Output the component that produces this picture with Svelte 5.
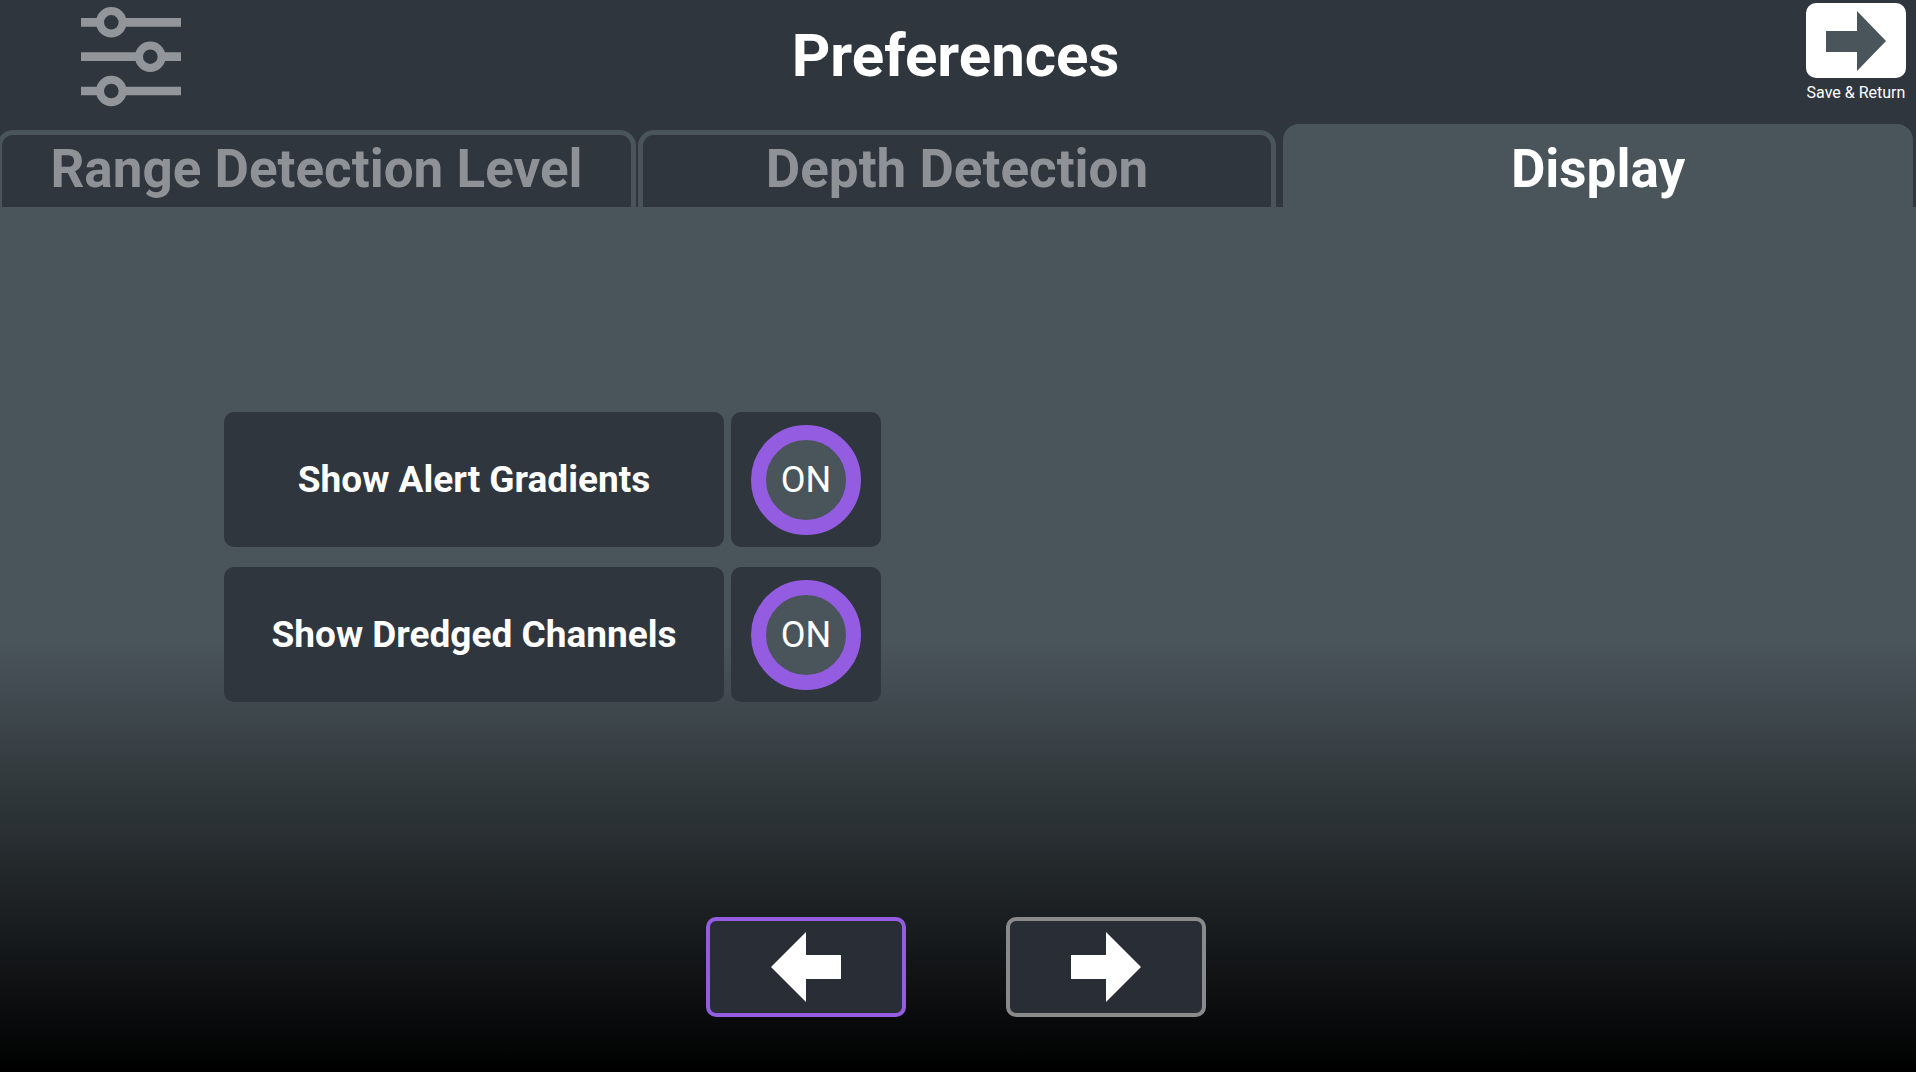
<script>
  let tabs = [
    { name: 'Range Detection Level', active: false },
    { name: 'Depth Detection', active: false },
    { name: 'Display', active: true }
  ];
  let options = [
    { label: 'Show Alert Gradients', value: 'ON' },
    { label: 'Show Dredged Channels', value: 'ON' }
  ];
</script>

<div class="page">
  <header class="header">
    <svg class="sliders" width="100" height="112" viewBox="0 0 100 112">
      <g fill="none" stroke="#92969a">
        <path d="M0 22.300H100M0 56.700H100M0 91H100" stroke-width="8.700" />
        <g fill="#2f363e" stroke-width="8">
          <circle cx="30.300" cy="22.300" r="11.300" />
          <circle cx="69.300" cy="56.700" r="11.300" />
          <circle cx="30.300" cy="91" r="11.300" />
        </g>
      </g>
    </svg>
    <h1>Preferences</h1>
    <div class="save">
      <button class="save-btn" aria-label="Save and return">
        <svg width="60" height="60" viewBox="0 0 60 60">
          <path d="M0 20H31V0L60 30L31 60V41H0Z" fill="#4a555b" />
        </svg>
      </button>
      <span>Save &amp; Return</span>
    </div>
  </header>

  <nav class="tabs">
    {#each tabs as tab}
      <div class="tab" class:active={tab.active}>{tab.name}</div>
    {/each}
  </nav>

  <main class="content">
    <div class="options">
      {#each options as opt}
        <div class="row">
          <div class="label">{opt.label}</div>
          <div class="toggle-box">
            <div class="ring">{opt.value}</div>
          </div>
        </div>
      {/each}
    </div>

    <div class="pager">
      <button class="page-btn selected" aria-label="Previous">
        <svg width="70" height="70" viewBox="0 0 70 70">
          <path d="M0 35L35 0V23H70V47H35V70Z" fill="#fff" />
        </svg>
      </button>
      <button class="page-btn" aria-label="Next">
        <svg width="70" height="70" viewBox="0 0 70 70">
          <path d="M70 35L35 0V23H0V47H35V70Z" fill="#fff" />
        </svg>
      </button>
    </div>
  </main>
</div>

<style>
  :global(body) {
    margin: 0;
    background: #000;
  }

  .page {
    width: 1916px;
    height: 1072px;
    display: flex;
    flex-direction: column;
    overflow: hidden;
    background: #2f363e;
    font-family: Roboto, sans-serif;
    color: #fff;
  }

  .header {
    height: 124px;
    flex: none;
    display: grid;
    grid-template-columns: 1fr auto 1fr;
    align-items: start;
    padding-right: 5px;
  }

  .sliders {
    display: block;
    margin-left: 81px;
  }

  h1 {
    margin: 25px 0 0;
    font-size: 60px;
    line-height: 62px;
    font-weight: 700;
  }

  .save {
    justify-self: end;
    margin: 3px 5px 0 0;
    width: 100px;
    display: flex;
    flex-direction: column;
    align-items: center;
    font-size: 16px;
    line-height: 18px;
    white-space: nowrap;
  }

  .save-btn {
    width: 100px;
    height: 75px;
    padding: 0;
    border: none;
    border-radius: 10px;
    background: #fff;
    display: flex;
    align-items: center;
    justify-content: center;
    margin-bottom: 6px;
  }

  .tabs {
    height: 83px;
    flex: none;
    display: grid;
    grid-template-columns: 639px 638px 635px;
    column-gap: 2px;
    margin-left: -3px;
    align-items: end;
  }

  .tab {
    box-sizing: border-box;
    height: 77px;
    border: 5px solid #4a555b;
    border-bottom: none;
    border-radius: 16px 16px 0 0;
    display: flex;
    align-items: center;
    justify-content: center;
    font-size: 53px;
    font-weight: 700;
    color: #8e9296;
    padding-bottom: 4px;
  }

  .tab.active {
    height: 83px;
    border: none;
    background: #4a555b;
    color: #fff;
    margin-left: 5px;
    padding: 6px 0 0;
  }

  .content {
    flex: 1;
    display: flex;
    flex-direction: column;
    background: linear-gradient(#4a555b 0, #4a555b 50%, #000 100%);
  }

  .options {
    display: flex;
    flex-direction: column;
    gap: 20px;
    padding: 205px 0 0 224px;
  }

  .row {
    display: flex;
    gap: 7px;
  }

  .label {
    width: 500px;
    height: 135px;
    border-radius: 10px;
    background: #2f363e;
    display: flex;
    align-items: center;
    justify-content: center;
    font-size: 37px;
    font-weight: 700;
  }

  .toggle-box {
    width: 150px;
    height: 135px;
    border-radius: 10px;
    background: #2f363e;
    display: flex;
    align-items: center;
    justify-content: center;
  }

  .ring {
    box-sizing: border-box;
    width: 110px;
    height: 110px;
    border: 15px solid #945ce0;
    border-radius: 50%;
    background: #4a555b;
    display: flex;
    align-items: center;
    justify-content: center;
    font-size: 36px;
    font-weight: 400;
  }

  .pager {
    margin-top: auto;
    display: flex;
    justify-content: center;
    gap: 100px;
    padding: 0 4px 55px 0;
  }

  .page-btn {
    box-sizing: border-box;
    width: 200px;
    height: 100px;
    border: 4px solid #8a8a8a;
    border-radius: 10px;
    background: #292d35;
    display: flex;
    align-items: center;
    justify-content: center;
    padding: 0;
  }

  .page-btn.selected {
    border-color: #945ce0;
  }
</style>
